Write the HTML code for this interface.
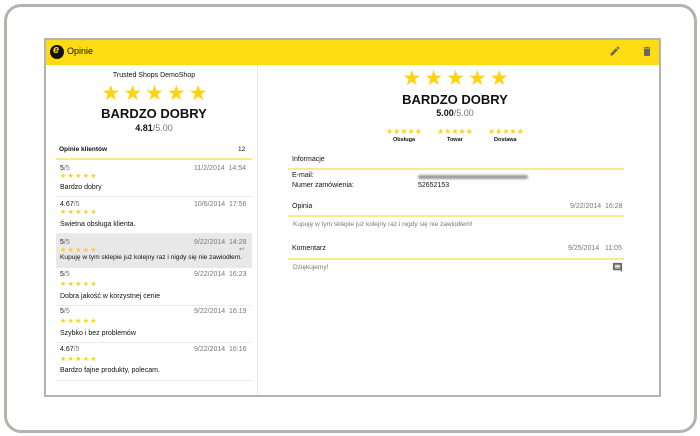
<!DOCTYPE html>
<html><head><meta charset="utf-8"><style>
*{margin:0;padding:0;box-sizing:border-box}
body{width:700px;height:436px;background:#fff;position:relative;overflow:hidden;font-family:"Liberation Sans",sans-serif;color:#111}
.a{position:absolute;white-space:nowrap}
.frame{position:absolute;left:4px;top:4px;width:693px;height:429px;border:3px solid #b3b3b0;border-radius:17px}
.screen{position:absolute;left:44px;top:38px;width:617px;height:359px;border:2px solid #b3b3b0;background:#fff}
.bar{position:absolute;left:46px;top:40px;width:613px;height:25px;background:#fedb12}
.st{color:#fdd20e}
.g{color:#777}
.yl{position:absolute;height:2px;background:#fde98a}
.sep{position:absolute;height:1px;background:#ececec;left:56px;width:196px}
.f7{font-size:7px}.f6{font-size:6.5px}
</style></head><body>
<div class="frame"></div>
<div class="screen"></div>
<div class="bar"></div>
<div class="a" style="left:50px;top:45px;width:14px;height:14px;border-radius:50%;background:#111"></div>
<div class="a" style="left:53px;top:44px;font-size:11px;font-weight:bold;font-style:italic;color:#fedb12">e</div>
<div class="a" style="left:67px;top:46px;font-size:9px">Opinie</div>
<svg class="a" style="left:609px;top:45px" width="12" height="12" viewBox="0 0 24 24"><path d="M3 17.25V21h3.75L17.81 9.94l-3.75-3.75L3 17.25zM20.71 7.04a1 1 0 000-1.41l-2.34-2.34a1 1 0 00-1.41 0l-1.83 1.83 3.75 3.75 1.83-1.83z" fill="#666"/></svg>
<svg class="a" style="left:641px;top:45px" width="12" height="13" viewBox="0 0 24 24"><path d="M6 19c0 1.1.9 2 2 2h8c1.1 0 2-.9 2-2V7H6v12zM19 4h-3.5l-1-1h-5l-1 1H5v2h14V4z" fill="#666"/></svg>
<div class="a" style="left:257px;top:65px;width:1px;height:330px;background:#e6e6e6"></div>

<div class="a f7" style="left:56px;width:196px;text-align:center;top:72px">Trusted Shops DemoShop</div>
<div class="a st" style="left:58px;width:196px;text-align:center;top:81px;font-size:21px;letter-spacing:3px">★★★★★</div>
<div class="a" style="left:56px;width:196px;text-align:center;top:106px;font-size:13px;font-weight:bold">BARDZO DOBRY</div>
<div class="a" style="left:56px;width:196px;text-align:center;top:123px;font-size:9px"><b>4.81</b><span class="g">/5.00</span></div>
<div class="a f6" style="left:59px;top:146px;font-weight:bold">Opinie klientów</div>
<div class="a f6" style="left:238px;top:146px">12</div>
<div class="yl" style="left:56px;width:196px;top:158px"></div>

<div class="a" style="left:56px;top:234px;width:196px;height:34px;background:#e8e8e8"></div>
<div class="sep" style="top:196px"></div><div class="sep" style="top:233px"></div><div class="sep" style="top:305px"></div><div class="sep" style="top:342px"></div><div class="sep" style="top:380px"></div>

<div class="a f7" style="left:60px;top:165px">5<span class="g">/5</span></div><div class="a f7 g" style="left:194px;top:165px">11/2/2014&nbsp; 14:54</div><div class="a st f7" style="left:60px;top:172px;letter-spacing:1.3px">★★★★★</div><div class="a f7" style="left:60px;top:184px">Bardzo dobry</div>
<div class="a f7" style="left:60px;top:201px">4.67<span class="g">/5</span></div><div class="a f7 g" style="left:194px;top:201px">10/6/2014&nbsp; 17:56</div><div class="a st f7" style="left:60px;top:208px;letter-spacing:1.3px">★★★★★</div><div class="a f7" style="left:60px;top:221px">Świetna obsługa klienta.</div>
<div class="a f7" style="left:60px;top:239px">5<span class="g">/5</span></div><div class="a f7 g" style="left:194px;top:239px">9/22/2014&nbsp; 14:28</div><div class="a st f7" style="left:60px;top:246px;letter-spacing:1.3px">★★★★★</div><div class="a f6 g" style="left:239px;top:245px">↩</div><div class="a" style="left:60px;top:254px;font-size:6.6px">Kupuję w tym sklepie już kolejny raz i nigdy się nie zawiodłem.</div>
<div class="a f7" style="left:60px;top:271px">5<span class="g">/5</span></div><div class="a f7 g" style="left:194px;top:271px">9/22/2014&nbsp; 16:23</div><div class="a st f7" style="left:60px;top:280px;letter-spacing:1.3px">★★★★★</div><div class="a f7" style="left:60px;top:293px">Dobra jakość w korzystnej cenie</div>
<div class="a f7" style="left:60px;top:308px">5<span class="g">/5</span></div><div class="a f7 g" style="left:194px;top:308px">9/22/2014&nbsp; 16:19</div><div class="a st f7" style="left:60px;top:317px;letter-spacing:1.3px">★★★★★</div><div class="a f7" style="left:60px;top:330px">Szybko i bez problemów</div>
<div class="a f7" style="left:60px;top:346px">4.67<span class="g">/5</span></div><div class="a f7 g" style="left:194px;top:346px">9/22/2014&nbsp; 16:16</div><div class="a st f7" style="left:60px;top:355px;letter-spacing:1.3px">★★★★★</div><div class="a f7" style="left:60px;top:367px">Bardzo fajne produkty, polecam.</div>

<div class="a st" style="left:302px;width:310px;text-align:center;top:66px;font-size:21px;letter-spacing:3px">★★★★★</div>
<div class="a" style="left:300px;width:310px;text-align:center;top:92px;font-size:13px;font-weight:bold">BARDZO DOBRY</div>
<div class="a" style="left:300px;width:310px;text-align:center;top:108px;font-size:9px"><b>5.00</b><span class="g">/5.00</span></div>
<div class="a st" style="left:386px;top:127px;font-size:8px">★★★★★</div><div class="a" style="left:393px;top:137px;font-size:5.5px;font-weight:bold">Obsługa</div>
<div class="a st" style="left:437px;top:127px;font-size:8px">★★★★★</div><div class="a" style="left:447px;top:137px;font-size:5.5px;font-weight:bold">Towar</div>
<div class="a st" style="left:488px;top:127px;font-size:8px">★★★★★</div><div class="a" style="left:494px;top:137px;font-size:5.5px;font-weight:bold">Dostawa</div>
<div class="a f7" style="left:292px;top:156px">Informacje</div>
<div class="yl" style="left:288px;width:336px;top:168px"></div>
<div class="a f7" style="left:292px;top:172px">E-mail:</div>
<div class="a" style="left:418px;top:175px;width:110px;height:4px;background:#999;border-radius:2px;filter:blur(1px)"></div>
<div class="a f7" style="left:292px;top:182px">Numer zamówienia:</div>
<div class="a f7" style="left:418px;top:182px">52652153</div>
<div class="a f7" style="left:292px;top:203px">Opinia</div>
<div class="a f7 g" style="left:570px;top:203px">9/22/2014&nbsp; 16:28</div>
<div class="yl" style="left:288px;width:336px;top:215px"></div>
<div class="a f6 g" style="left:293px;top:221px">Kupuję w tym sklepie już kolejny raz i nigdy się nie zawiodłem!</div>
<div class="a f7" style="left:292px;top:245px">Komentarz</div>
<div class="a f7 g" style="left:568px;top:245px">9/25/2014&nbsp;&nbsp; 11:05</div>
<div class="yl" style="left:288px;width:336px;top:258px"></div>
<div class="a f6 g" style="left:293px;top:264px">Dziękujemy!</div>
<svg class="a" style="left:612px;top:262px" width="11" height="11" viewBox="0 0 24 24"><path d="M21.99 4c0-1.1-.89-2-1.99-2H4c-1.1 0-2 .9-2 2v12c0 1.1.9 2 2 2h14l4 4-.01-18zM18 14H6v-2h12v2zm0-3H6V9h12v2zm0-3H6V6h12v2z" fill="#666"/></svg>
</body></html>
